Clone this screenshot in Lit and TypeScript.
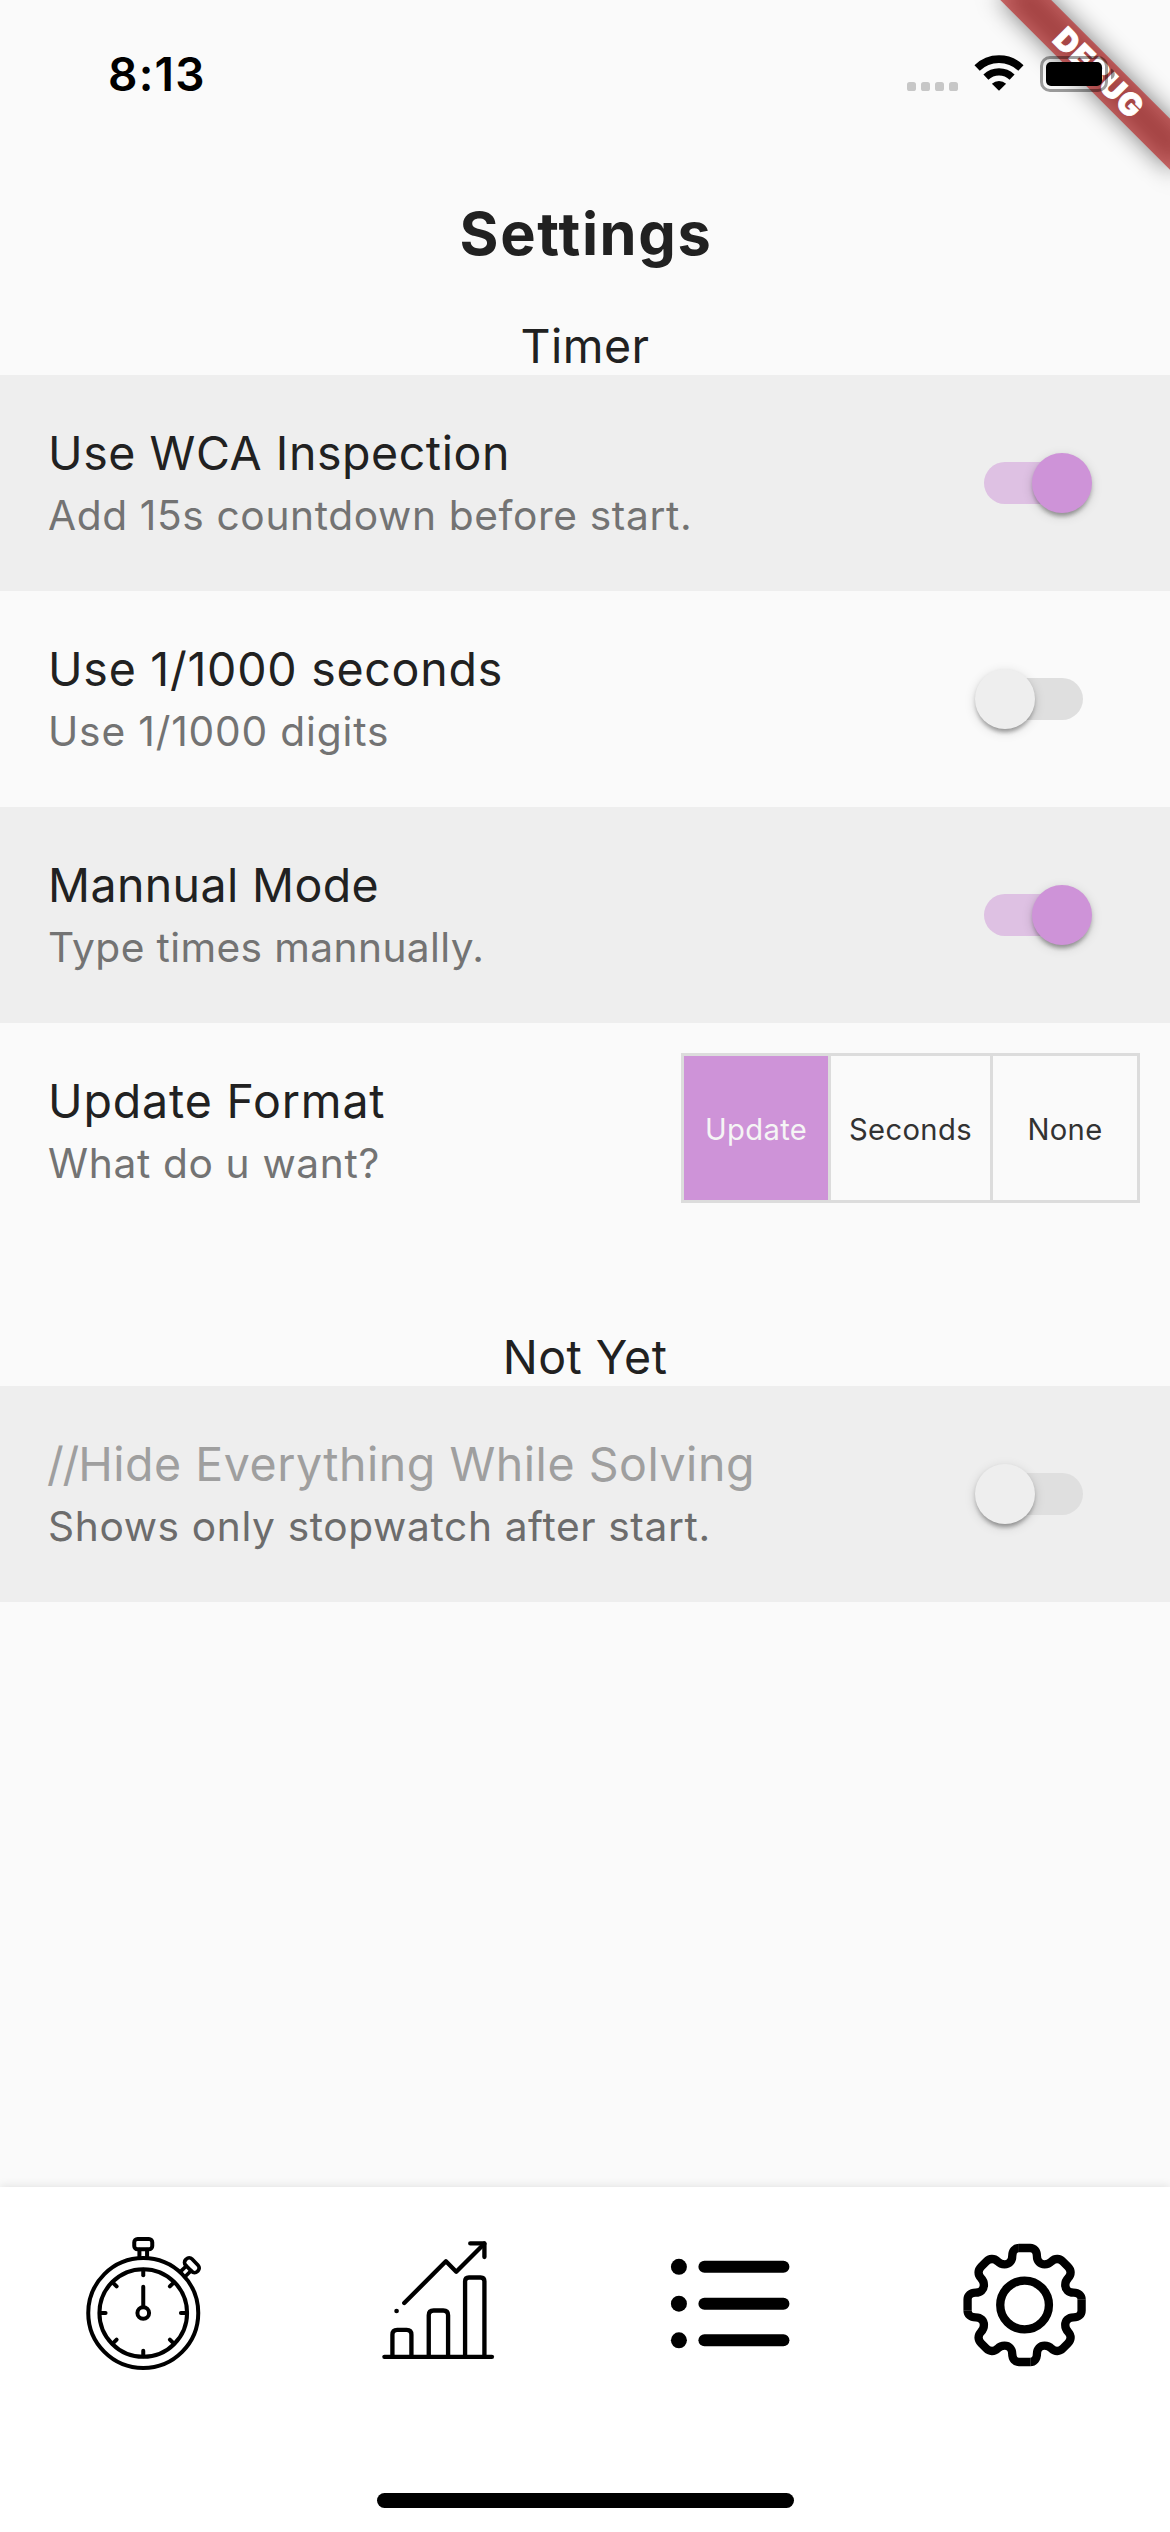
import { LitElement, html, css, svg, nothing } from "lit";
import { customElement, property, state } from "lit/decorators.js";
import { classMap } from "lit/directives/class-map.js";

interface Label {
  text: string;
  tracking: number;
  prefix?: string;
}

interface SwitchSetting {
  title: Label;
  subtitle: Label;
  on: boolean;
  shaded: boolean;
  disabled?: boolean;
}

@customElement("settings-switch")
class SettingsSwitch extends LitElement {
  @property({ type: Boolean }) on = false;

  static styles = css`
    :host {
      display: block;
      flex: none;
    }
    .switch {
      position: relative;
      width: 117px;
      height: 60px;
      padding: 9px;
      box-sizing: border-box;
    }
    .track {
      width: 99px;
      height: 42px;
      border-radius: 21px;
      background: #dfdfdf;
    }
    .thumb {
      position: absolute;
      top: 0;
      left: 0;
      width: 60px;
      height: 60px;
      border-radius: 50%;
      background: #eeeeee;
      box-shadow:
        0 6px 4px -3px rgba(0, 0, 0, 0.2),
        0 3px 4px rgba(0, 0, 0, 0.16),
        0 3px 12px rgba(0, 0, 0, 0.14);
    }
    .on .track {
      background: rgba(206, 147, 216, 0.5);
    }
    .on .thumb {
      left: 57px;
      background: #ce93d8;
    }
  `;

  render() {
    return html`
      <div class=${classMap({ switch: true, on: this.on })}>
        <div class="track"></div>
        <div class="thumb"></div>
      </div>
    `;
  }
}

@customElement("settings-row")
class SettingsRow extends LitElement {
  @property({ attribute: false }) heading: Label = { text: "", tracking: 0 };
  @property({ attribute: false }) caption: Label = { text: "", tracking: 0 };
  @property({ type: Boolean }) shaded = false;
  @property({ type: Boolean }) disabled = false;

  static styles = css`
    :host {
      display: block;
    }
    .row {
      display: flex;
      align-items: center;
      justify-content: space-between;
      height: 216px;
      padding-left: 48px;
      box-sizing: border-box;
    }
    .shaded {
      background: #eeeeee;
    }
    .labels {
      display: flex;
      flex-direction: column;
      gap: 7px;
      padding-top: 1px;
      white-space: nowrap;
    }
    .title {
      font-size: 46.5px;
      line-height: 58px;
      color: #212121;
    }
    .prefix {
      margin-left: -1px;
      letter-spacing: -1.2px;
    }
    .subtitle {
      font-size: 40.7px;
      line-height: 54px;
      color: #737373;
    }
    .disabled .title {
      color: #9f9f9f;
    }
    .disabled .subtitle {
      color: #6c6c6c;
    }
  `;

  render() {
    const { prefix, text, tracking } = this.heading;
    return html`
      <div class=${classMap({ row: true, shaded: this.shaded, disabled: this.disabled })}>
        <div class="labels">
          <div class="title" style="letter-spacing:${tracking}px">${prefix
            ? html`<span class="prefix">${prefix}</span>`
            : nothing}${text}</div>
          <div class="subtitle" style="letter-spacing:${this.caption.tracking}px">${this.caption.text}</div>
        </div>
        <slot></slot>
      </div>
    `;
  }
}

@customElement("status-bar")
class StatusBar extends LitElement {
  static styles = css`
    :host {
      display: block;
      position: relative;
      z-index: 2;
    }
    .bar {
      display: flex;
      justify-content: space-between;
      height: 141px;
      padding: 46px 54px 0 108px;
      box-sizing: border-box;
    }
    .time {
      font-size: 46px;
      font-weight: 600;
      line-height: 57px;
      letter-spacing: 1.2px;
      color: #000;
    }
    .icons {
      display: block;
      width: 210px;
      height: 40px;
      margin-top: 7px;
    }
  `;

  render() {
    return html`
      <div class="bar">
        <div class="time">8:13</div>
        <svg class="icons" viewBox="906 53 210 40">
          ${[907, 921, 935, 949].map(
            (x) => svg`<rect x=${x} y="82" width="9" height="9" rx="2.6" fill="#c7c7c7"/>`
          )}
          <g transform="translate(999 90.7)">
            <path d="M-21.9 -22.7 A31.5 31.5 0 0 1 21.9 -22.7" fill="none" stroke="#000" stroke-width="7.6"/>
            <path d="M-13.1 -13.6 A18.9 18.9 0 0 1 13.1 -13.6" fill="none" stroke="#000" stroke-width="7.2"/>
            <path d="M0 0 L-7.1 -6.9 A10.2 10.2 0 0 1 7.1 -6.9 Z"/>
          </g>
          <rect x="1041.5" y="57.5" width="65" height="33" rx="8.5" fill="none" stroke="#000" stroke-opacity="0.38" stroke-width="3"/>
          <rect x="1046" y="62" width="56" height="24" rx="5"/>
          <path d="M1111 68.5 C1116 70.5 1116 77.5 1111 79.5 Z" fill="#000" fill-opacity="0.4"/>
        </svg>
      </div>
    `;
  }
}

@customElement("debug-banner")
class DebugBanner extends LitElement {
  static styles = css`
    :host {
      position: absolute;
      top: 0;
      right: 0;
      width: 240px;
      height: 240px;
      overflow: hidden;
      z-index: 1;
    }
    .shadow,
    .ribbon {
      position: absolute;
      top: 84px;
      left: 120px;
      width: 240px;
      height: 36px;
      transform-origin: 120px -84px;
      transform: rotate(45deg);
    }
    .shadow {
      background: rgba(0, 0, 0, 0.5);
      filter: blur(12px);
    }
    .ribbon {
      background: rgba(183, 28, 28, 0.627);
      color: #fff;
      font-size: 31px;
      font-weight: 900;
      line-height: 36px;
      letter-spacing: 1px;
      text-indent: 3px;
      text-align: center;
      -webkit-text-stroke: 0.8px #fff;
    }
  `;

  render() {
    return html`<div class="shadow"></div><div class="ribbon">DEBUG</div>`;
  }
}

const TICKS = [0, 45, 90, 135, 180, 225, 270, 315];

const stopwatchIcon = svg`
  <g fill="none" stroke="#000" stroke-width="12" stroke-linecap="round" stroke-linejoin="round" transform="translate(250.5 429)">
    <circle r="165"/>
    <circle r="131.5"/>
    <circle r="17.5"/>
    <path d="M0 -22 V-79"/>
    ${TICKS.map((a) => svg`<path d="M0 -130 V-113" transform="rotate(${a})"/>`)}
    <rect x="-27" y="-222" width="54" height="31" rx="10"/>
    <path d="M-11.5 -190 V-170 M11.5 -190 V-170"/>
    <g transform="rotate(45.5) translate(0 -204) scale(0.92)">
      <rect x="-27" y="-15" width="54" height="29" rx="13"/>
      <path d="M-11 14 V36 M11 14 V36"/>
    </g>
  </g>`;

const chartIcon = svg`
  <g fill="none" stroke="#000" stroke-width="13" stroke-linecap="round" stroke-linejoin="round">
    <path d="M72.5 470.5 H395"/>
    <path d="M96.5 470 V404 Q96.5 389.5 111 389.5 H139 Q153.5 389.5 153.5 404 V470"/>
    <path d="M205.5 470 V346 Q205.5 331.5 220 331.5 H249 Q263.5 331.5 263.5 346 V470"/>
    <path d="M314.5 470 V244 Q314.5 232.5 326 232.5 H361 Q372.5 232.5 372.5 244 V470"/>
    <path d="M132 309 L257 184 L288 215 L372 131"/>
    <path d="M330 130 H372.5 V171"/>
  </g>
  <circle cx="109" cy="333" r="7"/>`;

const listIcon = svg`${[140.5, 251, 361].map(
  (y) => svg`<circle cx="117.5" cy=${y} r="24"/><rect x="176" y=${y - 18} width="273" height="36" rx="18"/>`
)}`;

const GEAR_QUADRANT =
  "M-17 -171 H17 C28 -171 37 -162 37 -147 C37 -131 47 -122 60 -122 C69 -122 75 -125 81 -131 C92 -141 105 -140 115 -130" +
  " L130 -115 C140 -105 141 -92 131 -81 C125 -75 122 -69 122 -60 C122 -47 131 -37 147 -37 C162 -37 171 -28 171 -17";

const gearIcon = svg`
  <g fill="none" stroke="#000" stroke-width="25" stroke-linejoin="round" transform="translate(253 255)">
    ${[0, 90, 180, 270].map((a) => svg`<path d=${GEAR_QUADRANT} transform="rotate(${a})"/>`)}
    <circle r="73"/>
  </g>`;

@customElement("bottom-nav")
class BottomNav extends LitElement {
  static styles = css`
    :host {
      display: block;
    }
    .nav {
      display: flex;
      flex-direction: column;
      justify-content: space-between;
      align-items: center;
      height: 345px;
      padding: 33px 0 24px;
      box-sizing: border-box;
      background: #fff;
      box-shadow: 0 -1px 9px rgba(0, 0, 0, 0.1);
    }
    .items {
      display: flex;
      width: 100%;
    }
    .item {
      flex: 1;
      display: flex;
      justify-content: center;
    }
    .icon {
      display: block;
      width: 170px;
      height: 170px;
    }
    .home {
      width: 417px;
      height: 15px;
      border-radius: 8px;
      background: #000;
    }
  `;

  render() {
    return html`
      <div class="nav">
        <div class="items">
          <div class="item"><svg class="icon" viewBox="3.75 150 510 510">${stopwatchIcon}</svg></div>
          <div class="item"><svg class="icon" viewBox="-18.75 60 510 510">${chartIcon}</svg></div>
          <div class="item"><svg class="icon" viewBox="18.75 0 510 510">${listIcon}</svg></div>
          <div class="item"><svg class="icon" viewBox="-3.75 0 510 510">${gearIcon}</svg></div>
        </div>
        <div class="home"></div>
      </div>
    `;
  }
}

@customElement("app-root")
class AppRoot extends LitElement {
  @state() private timer: SwitchSetting[] = [
    {
      title: { text: "Use WCA Inspection", tracking: 0.56 },
      subtitle: { text: "Add 15s countdown before start.", tracking: 0.62 },
      on: true,
      shaded: true,
    },
    {
      title: { text: "Use 1/1000 seconds", tracking: 0.74 },
      subtitle: { text: "Use 1/1000 digits", tracking: 0.84 },
      on: false,
      shaded: false,
    },
    {
      title: { text: "Mannual Mode", tracking: 0.38 },
      subtitle: { text: "Type times mannually.", tracking: 0.38 },
      on: true,
      shaded: true,
    },
  ];

  @state() private pending: SwitchSetting[] = [
    {
      title: { prefix: "//", text: "Hide Everything While Solving", tracking: 0.53 },
      subtitle: { text: "Shows only stopwatch after start.", tracking: 0.62 },
      on: false,
      shaded: true,
      disabled: true,
    },
  ];

  @state() private format = "Update";

  static styles = css`
    :host {
      display: block;
    }
    .screen {
      position: relative;
      display: flex;
      flex-direction: column;
      width: 1170px;
      height: 2532px;
      overflow: hidden;
      background: #fafafa;
      color: #212121;
      font-family: Inter, "Liberation Sans", sans-serif;
    }
    .content {
      flex: 1;
      display: flex;
      flex-direction: column;
    }
    .page-title {
      margin: 56px 0 48px;
      font-size: 59.5px;
      font-weight: 700;
      line-height: 72px;
      letter-spacing: 1.6px;
      text-indent: 2px;
      text-align: center;
    }
    .section {
      font-size: 46.5px;
      line-height: 58px;
      letter-spacing: 0.45px;
      text-align: center;
    }
    .pending {
      margin-top: 89px;
    }
    .toggle {
      margin-right: 78px;
    }
    .formats {
      display: flex;
      gap: 3px;
      height: 150px;
      padding: 3px;
      margin: 0 30px 6px 0;
      box-sizing: border-box;
      background: #dcdcdc;
    }
    .format {
      display: flex;
      align-items: center;
      justify-content: center;
      width: 144px;
      padding-top: 3px;
      box-sizing: border-box;
      background: #fafafa;
      color: #323232;
      font-size: 29.2px;
      line-height: 36px;
      letter-spacing: 0.35px;
    }
    .wide {
      width: 159px;
    }
    .selected {
      background: #ce93d8;
      color: #f5f5f5;
    }
  `;

  private renderSwitchRow(s: SwitchSetting) {
    return html`
      <settings-row .heading=${s.title} .caption=${s.subtitle} ?shaded=${s.shaded} ?disabled=${!!s.disabled}>
        <settings-switch class="toggle" ?on=${s.on}></settings-switch>
      </settings-row>
    `;
  }

  render() {
    return html`
      <div class="screen">
        <status-bar></status-bar>
        <debug-banner></debug-banner>
        <div class="content">
          <div class="page-title">Settings</div>
          <div class="section">Timer</div>
          ${this.timer.map((s) => this.renderSwitchRow(s))}
          <settings-row
            .heading=${{ text: "Update Format", tracking: 0.85 }}
            .caption=${{ text: "What do u want?", tracking: 0.64 }}
          >
            <div class="formats">
              ${["Update", "Seconds", "None"].map(
                (f) => html`<div
                  class=${classMap({ format: true, wide: f === "Seconds", selected: f === this.format })}
                >${f}</div>`
              )}
            </div>
          </settings-row>
          <div class="section pending">Not Yet</div>
          ${this.pending.map((s) => this.renderSwitchRow(s))}
        </div>
        <bottom-nav></bottom-nav>
      </div>
    `;
  }
}
